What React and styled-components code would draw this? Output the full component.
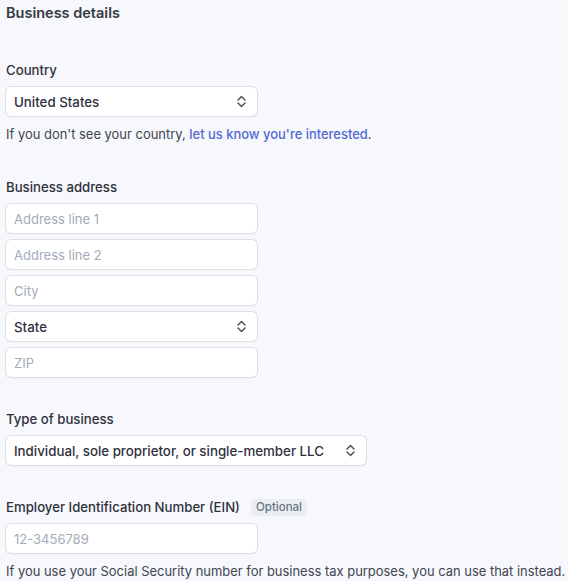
import React from "react";
import styled, { createGlobalStyle } from "styled-components";

const Global = createGlobalStyle`
  html, body { margin: 0; padding: 0; background: #f6f8fb; }
  body { font-family: Inter, "Noto Sans", sans-serif; color: #30313d; }
  * { box-sizing: border-box; }
`;

const Page = styled.div`
  padding: 1px 0 0 5px;
  min-height: 581px;
  display: flex;
  flex-direction: column;
`;

const Title = styled.h2`
  margin: 0 0 35px 1px;
  font-size: 14.5px;
  line-height: 24px;
  font-weight: 600;
  color: #353a44;
`;

const Section = styled.div`
  display: flex;
  flex-direction: column;
  margin-bottom: ${(p) => p.$gap ?? 32}px;
`;

const LabelRow = styled.div`
  display: flex;
  align-items: center;
  gap: 11px;
  margin: 0 0 7px 1px;
  height: 20px;
`;

const Label = styled.span`
  font-size: 13.2px;
  line-height: 20px;
  font-weight: 500;
  color: #30313d;
`;

const Badge = styled.span`
  background: #ebeef1;
  color: #687385;
  font-size: 11.5px;
  font-weight: 500;
  line-height: 17px;
  padding: 0 5px;
  border-radius: 4px;
`;

const Stack = styled.div`
  display: flex;
  flex-direction: column;
  gap: 7px;
`;

const Field = styled.div`
  width: ${(p) => p.$w ?? 251}px;
  height: 29px;
  background: #fff;
  border-radius: 5px;
  box-shadow: 0 0 0 1px #dcdfe6, 0 1px 1.5px 0 rgba(0, 0, 0, 0.09);
  margin-left: 1px;
  display: flex;
  align-items: center;
  justify-content: space-between;
  padding: 0 11px 0 8px;
  font-size: 13px;
  line-height: 20px;
`;

const Placeholder = styled.span`
  color: #a3acb9;
  font-weight: 400;
`;

const Value = styled.span`
  color: #30313d;
  font-weight: 500;
  font-size: 13.3px;
`;

const Help = styled.p`
  margin: 8px 0 0 1px;
  font-size: 12.95px;
  line-height: 21px;
  color: #414552;
`;

const Link = styled.a`
  color: #5469d4;
  font-weight: 500;
  text-decoration: none;
`;

const Chevron = () => (
  <svg width="9" height="13" viewBox="0 0 9 13" fill="none">
    <path d="M1 5 L4.5 1.5 L8 5" stroke="#545969" strokeWidth="1.6" strokeLinecap="round" strokeLinejoin="round" />
    <path d="M1 8 L4.5 11.5 L8 8" stroke="#545969" strokeWidth="1.6" strokeLinecap="round" strokeLinejoin="round" />
  </svg>
);

const Select = ({ value, w }) => (
  <Field $w={w}>
    <Value>{value}</Value>
    <Chevron />
  </Field>
);

const Input = ({ placeholder }) => (
  <Field>
    <Placeholder>{placeholder}</Placeholder>
  </Field>
);

export default function App() {
  return (
    <>
      <Global />
      <Page>
        <Title>Business details</Title>
        <Section>
          <LabelRow><Label>Country</Label></LabelRow>
          <Select value="United States" />
          <Help>
            If you don't see your country, <Link href="#">let us know you're interested</Link>.
          </Help>
        </Section>
        <Section>
          <LabelRow><Label>Business address</Label></LabelRow>
          <Stack>
            <Input placeholder="Address line 1" />
            <Input placeholder="Address line 2" />
            <Input placeholder="City" />
            <Select value="State" />
            <Input placeholder="ZIP" />
          </Stack>
        </Section>
        <Section>
          <LabelRow><Label>Type of business</Label></LabelRow>
          <Select value="Individual, sole proprietor, or single-member LLC" w={360} />
        </Section>
        <Section $gap={0}>
          <LabelRow>
            <Label>Employer Identification Number (EIN)</Label>
            <Badge>Optional</Badge>
          </LabelRow>
          <Input placeholder="12-3456789" />
          <Help>
            If you use your Social Security number for business tax purposes, you can use that instead.
          </Help>
        </Section>
      </Page>
    </>
  );
}
